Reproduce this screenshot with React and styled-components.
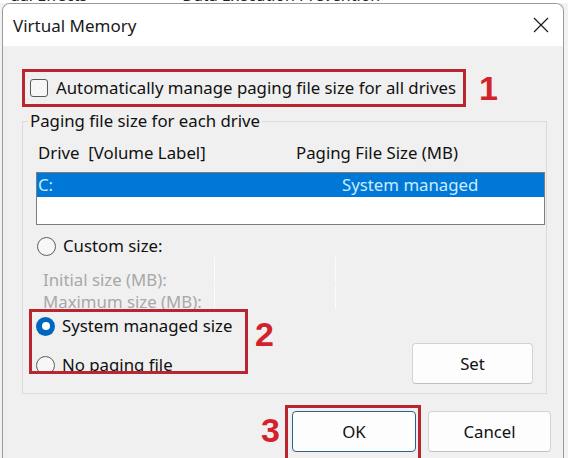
import React from 'react';
import styled, { createGlobalStyle } from 'styled-components';

const GlobalStyle = createGlobalStyle`
  html, body {
    margin: 0;
    padding: 0;
  }
  body {
    background: #ffffff;
    font-family: "Noto Sans", "Open Sans", sans-serif;
    color: #111111;
  }
`;

const Page = styled.div`
  width: 568px;
  height: 458px;
  overflow: hidden;
  background: #f2f2f2;
`;

const BehindStrip = styled.div`
  height: 3px;
  overflow: hidden;
  background: #ffffff;
`;

const BehindText = styled.div`
  display: flex;
  gap: 95px;
  padding-left: 10px;
  margin-top: -15px;
  font-size: 16px;
  line-height: 20px;
  color: #222;
  white-space: nowrap;
`;

const Window = styled.div`
  margin-left: 2px;
  width: 562px;
  height: 470px;
  box-sizing: border-box;
  border: 1px solid #9a9a9a;
  border-bottom: none;
  border-radius: 8px 8px 0 0;
  overflow: hidden;
  background: #f0f0f0;
`;

const TitleBar = styled.div`
  height: 42px;
  background: #ffffff;
  display: flex;
  align-items: center;
  justify-content: space-between;
  padding: 0 14px 0 10px;
`;

const Title = styled.span`
  font-size: 17px;
  color: #1a1a1a;
`;

const Body = styled.div`
  padding: 23px 16px 0 19px;
  font-size: 16.8px;
  line-height: 22px;
`;

const AutoRow = styled.div`
  display: flex;
  align-items: center;
`;

const RedFrame = styled.div`
  position: relative;
  box-sizing: border-box;
  width: ${p => p.$w}px;
  height: ${p => p.$h}px;
  border: 3px solid #b9262f;
  overflow: hidden;
  padding: ${p => p.$pad || '0'};
  display: flex;
  flex-direction: ${p => (p.$column ? 'column' : 'row')};
  align-items: ${p => (p.$column ? 'flex-start' : 'center')};
  gap: ${p => p.$gap || 0}px;
  margin-left: ${p => p.$ml || 0}px;
`;

const Marker = styled.span`
  font-family: "Liberation Sans", Arial, sans-serif;
  font-weight: 700;
  font-size: 34px;
  line-height: 34px;
  color: #d3222b;
  margin-left: ${p => p.$ml || 0}px;
  margin-right: ${p => p.$mr || 0}px;
  margin-top: ${p => p.$mt || 0}px;
`;

const Checkbox = styled.span`
  width: 18px;
  height: 18px;
  box-sizing: border-box;
  border: 1px solid #5a5a5a;
  border-radius: 3px;
  background: #f6f6f6;
  flex-shrink: 0;
`;

const CheckLabel = styled.span`
  margin-left: 8px;
  white-space: nowrap;
  color: #111;
`;

const GroupBox = styled.fieldset`
  margin: 3px 0 0 0;
  width: 525px;
  min-width: 0;
  box-sizing: border-box;
  border: 1px solid #dadada;
  padding: 0 1px 9px 13px;
`;

const Legend = styled.legend`
  padding: 0 2px;
  margin-left: -8px;
  line-height: 22px;
  color: #111;
`;

const Columns = styled.div`
  display: grid;
  grid-template-columns: ${p => p.$first}px 1fr;
  padding-left: ${p => p.$pl || 0}px;
  white-space: nowrap;
`;

const Headers = styled(Columns)`
  margin-top: 10px;
`;

const ListBox = styled.div`
  margin-top: 8px;
  height: 53px;
  box-sizing: border-box;
  border: 1px solid #7d7d7d;
  background: #ffffff;
`;

const SelectedRow = styled(Columns)`
  height: 24px;
  line-height: 24px;
  background: #0078d7;
  color: #c9ecff;
`;

const Option = styled.div`
  display: flex;
  align-items: center;
  gap: 7px;
  height: 22px;
  padding-left: ${p => p.$pl || 0}px;
  margin-top: ${p => p.$mt || 0}px;
  white-space: nowrap;
  color: #111;
`;

const Radio = styled.span`
  width: 19px;
  height: 19px;
  box-sizing: border-box;
  border-radius: 50%;
  flex-shrink: 0;
  border: ${p => (p.$checked ? 'none' : '1px solid #5c5c5c')};
  background: ${p => (p.$checked ? '#0067c0' : '#f7f7f7')};
  display: flex;
  align-items: center;
  justify-content: center;

  &::after {
    content: '';
    display: ${p => (p.$checked ? 'block' : 'none')};
    width: 8px;
    height: 8px;
    border-radius: 50%;
    background: #ffffff;
  }
`;

const DisabledBlock = styled.div`
  height: 52px;
  display: flex;
`;

const DisabledLabels = styled.div`
  width: 178px;
  padding: 12px 0 0 7px;
  box-sizing: border-box;
  color: #a8a8a8;
  white-space: nowrap;
`;

const DisabledFields = styled.div`
  display: flex;
  flex-direction: column;
  gap: 2px;
`;

const DisabledField = styled.div`
  width: 122px;
  height: 27px;
  box-sizing: border-box;
  border-left: 1px solid #fbfbfb;
  border-right: 1px solid #fbfbfb;
`;

const BottomArea = styled.div`
  display: flex;
  align-items: flex-start;
  justify-content: space-between;
`;

const RedGroup = styled.div`
  display: flex;
  align-items: flex-start;
`;

const Button = styled.button`
  width: ${p => p.$w}px;
  height: 41px;
  box-sizing: border-box;
  border: 1px solid ${p => (p.$focused ? '#2f5f8f' : '#d3d3d3')};
  border-bottom-color: ${p => (p.$focused ? '#2f5f8f' : '#c0c0c0')};
  border-radius: 4px;
  background: #fdfdfd;
  font-family: inherit;
  font-size: 16.8px;
  color: #111;
  padding: 0;
  margin-top: ${p => p.$mt || 0}px;
  margin-right: ${p => p.$mr || 0}px;
  margin-left: ${p => p.$ml || 0}px;
`;

const Footer = styled.div`
  display: flex;
  justify-content: flex-end;
  align-items: flex-start;
  margin: 11px -4px 0 0;
`;

const CloseIcon = () => (
  <svg width="16" height="16" viewBox="0 0 16 16" fill="none">
    <path d="M1 1 L15 15 M15 1 L1 15" stroke="#1a1a1a" strokeWidth="1.2" />
  </svg>
);

export default function App() {
  return (
    <Page>
      <GlobalStyle />
      <BehindStrip>
        <BehindText>
          <span>ual Effects</span>
          <span>Data Execution Prevention</span>
        </BehindText>
      </BehindStrip>
      <Window>
        <TitleBar>
          <Title>Virtual Memory</Title>
          <CloseIcon />
        </TitleBar>
        <Body>
          <AutoRow>
            <RedFrame $w={444} $h={38} $pad="0 0 0 5px">
              <Checkbox />
              <CheckLabel>Automatically manage paging file size for all drives</CheckLabel>
            </RedFrame>
            <Marker $ml={13}>1</Marker>
          </AutoRow>

          <GroupBox>
            <Legend>Paging file size for each drive</Legend>
            <Headers $first={258} $pl={2}>
              <span>Drive&nbsp;&nbsp;[Volume Label]</span>
              <span>Paging File Size (MB)</span>
            </Headers>
            <ListBox>
              <SelectedRow $first={304} $pl={1}>
                <span>C:</span>
                <span>System managed</span>
              </SelectedRow>
            </ListBox>

            <Option $pl={1} $mt={10}>
              <Radio />
              <span>Custom size:</span>
            </Option>

            <DisabledBlock>
              <DisabledLabels>
                <div>Initial size (MB):</div>
                <div>Maximum size (MB):</div>
              </DisabledLabels>
              <DisabledFields>
                <DisabledField />
                <DisabledField />
              </DisabledFields>
            </DisabledBlock>

            <BottomArea>
              <RedGroup>
                <RedFrame $w={219} $h={65} $pad="3px 0 0 4px" $column $gap={17} $ml={-7}>
                  <Option>
                    <Radio $checked />
                    <span>System managed size</span>
                  </Option>
                  <Option>
                    <Radio />
                    <span>No paging file</span>
                  </Option>
                </RedFrame>
                <Marker $ml={7} $mt={8}>2</Marker>
              </RedGroup>
              <Button $w={121} $mt={34} $mr={12}>Set</Button>
            </BottomArea>
          </GroupBox>

          <Footer>
            <Marker $mr={5} $mt={8}>3</Marker>
            <RedFrame $w={136} $h={60} $pad="3px 0 0 4px" $column>
              <Button $w={124} $focused>OK</Button>
            </RedFrame>
            <Button $w={123} $mt={6} $ml={7}>Cancel</Button>
          </Footer>
        </Body>
      </Window>
    </Page>
  );
}
